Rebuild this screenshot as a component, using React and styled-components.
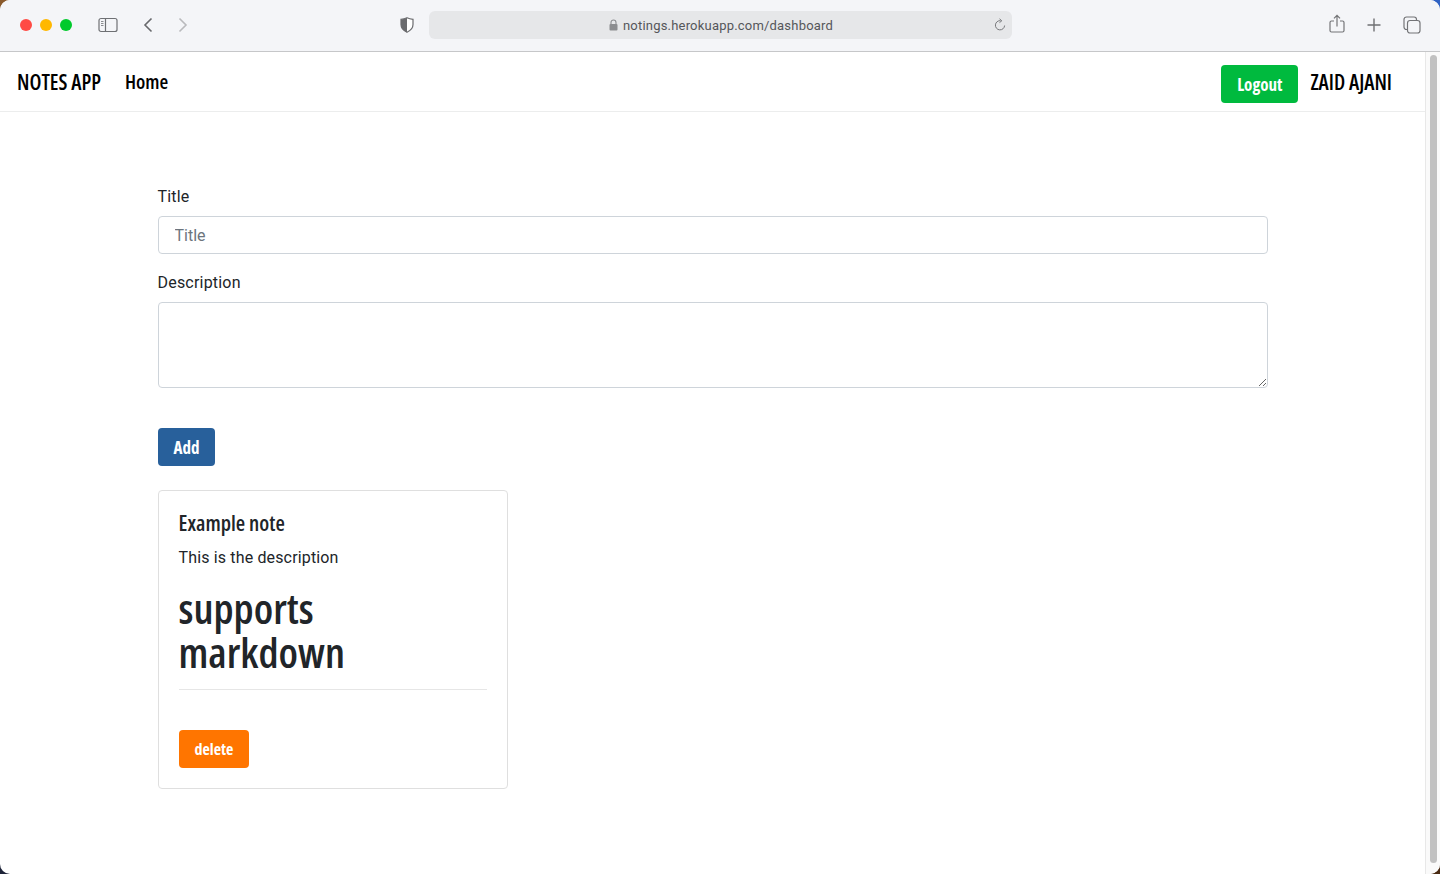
import styled, { createGlobalStyle } from "styled-components";

const GlobalStyle = createGlobalStyle`
  * {
    box-sizing: border-box;
  }
  html,
  body {
    margin: 0;
    height: 100%;
    overflow: hidden;
  }
  body {
    background: conic-gradient(#2f62c4 0 25%, #4a2a12 0 50%, #1d2338 0 75%, #8a5a2c 0);
    font-family: "Roboto", "Liberation Sans", sans-serif;
    color: #212529;
  }
`;

export default function App() {
  return (
    <Window>
      <GlobalStyle />
      <Toolbar>
        <TrafficLights>
          <Light color="#ff4b44" />
          <Light color="#ffb800" />
          <Light color="#00ca2c" />
        </TrafficLights>
        <SidebarIcon width="20" height="16" viewBox="0 0 20 16" fill="none">
          <rect x="1" y="1.5" width="18" height="13" rx="2" stroke="#6e7074" strokeWidth="1.2" />
          <path d="M7.5 1.5v13" stroke="#6e7074" strokeWidth="1.2" />
          <path d="M3 4.5h2.5M3 6.5h2.5M3 8.5h2.5" stroke="#8a8c90" strokeWidth="1.1" />
        </SidebarIcon>
        <NavIcon width="10" height="16" viewBox="0 0 10 16" fill="none">
          <path d="M8.5 1.5 2 8l6.5 6.5" stroke="#68696c" strokeWidth="1.6" />
        </NavIcon>
        <NavIcon width="10" height="16" viewBox="0 0 10 16" fill="none">
          <path d="M1.5 1.5 8 8l-6.5 6.5" stroke="#b9babd" strokeWidth="1.6" />
        </NavIcon>
        <ShieldIcon width="14" height="16" viewBox="0 0 14 16">
          <path d="M7 .8c2 1 3.8 1.4 6 1.6v5.2c0 3.4-2.5 6.1-6 7.6-3.500-1.500-6-4.200-6-7.600V2.400C3.200 2.200 5 1.800 7 .8Z" fill="#fff" stroke="#6a6b6e" strokeWidth="1.200" />
          <path d="M7 .8v14.600c-3.500-1.500-6-4.200-6-7.600V2.400C3.200 2.200 5 1.800 7 .8Z" fill="#6a6b6e" />
        </ShieldIcon>
        <AddressBar>
          <AddressText>
            <svg width="9" height="12" viewBox="0 0 9 12">
              <path d="M2 5V3.500a2.500 2.500 0 0 1 5 0V5" fill="none" stroke="#8c8d90" strokeWidth="1.100" />
              <rect x=".5" y="5" width="8" height="6.500" rx="1" fill="#8c8d90" />
            </svg>
            notings.herokuapp.com/dashboard
          </AddressText>
          <ReloadIcon width="12" height="14" viewBox="0 0 12 14" fill="none">
            <path d="M6.500 2.700A4.600 4.600 0 1 0 10.600 7.500" stroke="#77787b" strokeWidth="1" />
            <path d="M5.500.8 7.800 2.800 5.500 4.600" stroke="#77787b" strokeWidth="1" />
          </ReloadIcon>
        </AddressBar>
        <ToolbarRight>
          <ShareIcon width="16" height="20" viewBox="0 0 16 20" fill="none">
            <path d="M5 7H2.500A1.500 1.500 0 0 0 1 8.500v8A1.500 1.500 0 0 0 2.500 18h11a1.500 1.500 0 0 0 1.500-1.500v-8A1.500 1.500 0 0 0 13.500 7H11" stroke="#737477" strokeWidth="1.200" />
            <path d="M8 12.500V1.500M5 4.300 8 1.300l3 3" stroke="#737477" strokeWidth="1.200" />
          </ShareIcon>
          <PlusIcon width="14" height="14" viewBox="0 0 14 14" fill="none">
            <path d="M7 .5v13M.5 7h13" stroke="#6f7073" strokeWidth="1.400" />
          </PlusIcon>
          <svg width="18" height="18" viewBox="0 0 18 18" fill="none">
            <rect x="1" y="1" width="12.500" height="12.500" rx="2.500" stroke="#737477" strokeWidth="1.200" />
            <rect x="4.500" y="4.500" width="12.500" height="12.500" rx="2.500" fill="#f4f5f8" stroke="#737477" strokeWidth="1.200" />
          </svg>
        </ToolbarRight>
      </Toolbar>
      <Viewport>
        <Page>
          <Navbar>
            <Brand>NOTES APP</Brand>
            <NavLink>Home</NavLink>
            <NavRight>
              <LogoutButton color="#00ba3e">Logout</LogoutButton>
              <UserName>ZAID AJANI</UserName>
            </NavRight>
          </Navbar>
          <Container>
            <Field>
              <Label>Title</Label>
              <TextInput placeholder="Title" readOnly />
            </Field>
            <Field $wide>
              <Label>Description</Label>
              <TextArea readOnly />
            </Field>
            <Button color="#28609b">Add</Button>
            <NoteCard>
              <NoteTitle>Example note</NoteTitle>
              <NoteText>This is the description</NoteText>
              <NoteHeading>supports markdown</NoteHeading>
              <Divider />
              <DeleteButton color="#ff7500">delete</DeleteButton>
            </NoteCard>
          </Container>
        </Page>
        <Scrollbar>
          <ScrollThumb />
        </Scrollbar>
      </Viewport>
    </Window>
  );
}

const condensed = `
  font-family: "Open Sans", "Liberation Sans", sans-serif;
  font-stretch: 75%;
  font-weight: 600;
`;

const Window = styled.div`
  display: flex;
  flex-direction: column;
  width: 1440px;
  height: 874px;
  border-radius: 10px;
  overflow: hidden;
  background: #fff;
`;

const Toolbar = styled.header`
  display: flex;
  align-items: center;
  flex: none;
  height: 52px;
  padding: 0 19px 2px 20px;
  background: #f4f5f8;
  border-bottom: 1px solid #c6c7c9;
`;

const TrafficLights = styled.div`
  display: flex;
  gap: 8px;
`;

const Light = styled.span`
  width: 12px;
  height: 12px;
  border-radius: 50%;
  background: ${(p) => p.color};
`;

const SidebarIcon = styled.svg`
  margin-left: 26px;
`;

const NavIcon = styled.svg`
  margin-left: 25px;
`;

const ShieldIcon = styled.svg`
  margin-left: 212px;
`;

const AddressBar = styled.div`
  display: flex;
  align-items: center;
  justify-content: center;
  position: relative;
  width: 583px;
  height: 28px;
  margin-left: 15px;
  border-radius: 6px;
  background: #e6e7e9;
`;

const AddressText = styled.span`
  display: flex;
  align-items: center;
  gap: 5px;
  padding: 1px 0 0 1px;
  font-size: 13px;
  letter-spacing: 0.2px;
  color: #55565a;
`;

const ReloadIcon = styled.svg`
  position: absolute;
  right: 6px;
  top: 7px;
`;

const ToolbarRight = styled.div`
  display: flex;
  align-items: center;
  gap: 21px;
  margin-left: auto;
`;

const ShareIcon = styled.svg`
  margin-right: 1px;
  margin-bottom: 1px;
  transform: translateX(-1px);
`;

const PlusIcon = styled.svg`
  transform: translateX(-1px);
`;

const Viewport = styled.div`
  display: flex;
  flex: 1;
  min-height: 0;
`;

const Page = styled.main`
  flex: 1;
  min-width: 0;
`;

const Navbar = styled.nav`
  display: flex;
  align-items: center;
  height: 60px;
  padding: 0 33px 0 17px;
  border-bottom: 1px solid #eceded;
`;

const Brand = styled.span`
  ${condensed}
  font-size: 21px;
  color: #000;
`;

const NavLink = styled.span`
  margin-left: 24px;
  ${condensed}
  font-size: 20px;
  color: #000;
`;

const NavRight = styled.div`
  display: flex;
  align-items: center;
  gap: 12px;
  margin-left: auto;
`;

const UserName = styled.span`
  ${condensed}
  font-size: 21px;
  color: #000;
`;

const Button = styled.button`
  align-self: flex-start;
  height: 38px;
  padding: 0 16px;
  border: none;
  border-radius: 4px;
  background: ${(p) => p.color};
  ${condensed}
  font-size: 17px;
  font-weight: 700;
  color: #fff;
`;

const LogoutButton = styled(Button)`
  margin-top: 5px;
`;

const DeleteButton = styled(Button)`
  font-size: 16px;
`;

const Container = styled.div`
  display: flex;
  flex-direction: column;
  align-items: stretch;
  width: 1110px;
  margin: 0 auto;
  padding-top: 73px;
`;

const Field = styled.div`
  display: flex;
  flex-direction: column;
  gap: 7px;
  margin-bottom: ${(p) => (p.$wide ? "40px" : "17px")};
`;

const Label = styled.label`
  font-size: 16px;
  line-height: 24px;
  letter-spacing: 0.2px;
`;

const TextInput = styled.input`
  height: 38px;
  padding: 6px 16px;
  border: 1px solid #ced4da;
  border-radius: 4px;
  font: inherit;
  &::placeholder {
    color: #6c757d;
  }
`;

const TextArea = styled.textarea`
  height: 86px;
  padding: 6px 16px;
  border: 1px solid #ced4da;
  border-radius: 4px;
  font: inherit;
`;

const NoteCard = styled.article`
  display: flex;
  flex-direction: column;
  width: 350px;
  height: 299px;
  margin-top: 24px;
  padding: 20px;
  border: 1px solid #dfdfdf;
  border-radius: 4px;
`;

const NoteTitle = styled.h5`
  margin: 0 0 11px;
  ${condensed}
  font-size: 21.5px;
  line-height: 24px;
`;

const NoteText = styled.p`
  margin: 0 0 16px;
  font-size: 16px;
  line-height: 24px;
  letter-spacing: 0.15px;
`;

const NoteHeading = styled.h1`
  max-width: 300px;
  margin: 0 0 15px;
  ${condensed}
  font-size: 42px;
  line-height: 44px;
`;

const Divider = styled.hr`
  width: 100%;
  margin: 0 0 40px;
  border: none;
  border-top: 1px solid #e6e6e6;
`;

const Scrollbar = styled.div`
  flex: none;
  width: 15px;
  padding: 3px 3px 3px 4px;
  background: #fafafa;
  border-left: 1px solid #e8e8e8;
`;

const ScrollThumb = styled.div`
  height: 808px;
  border-radius: 4px;
  background: #c1c1c1;
`;
